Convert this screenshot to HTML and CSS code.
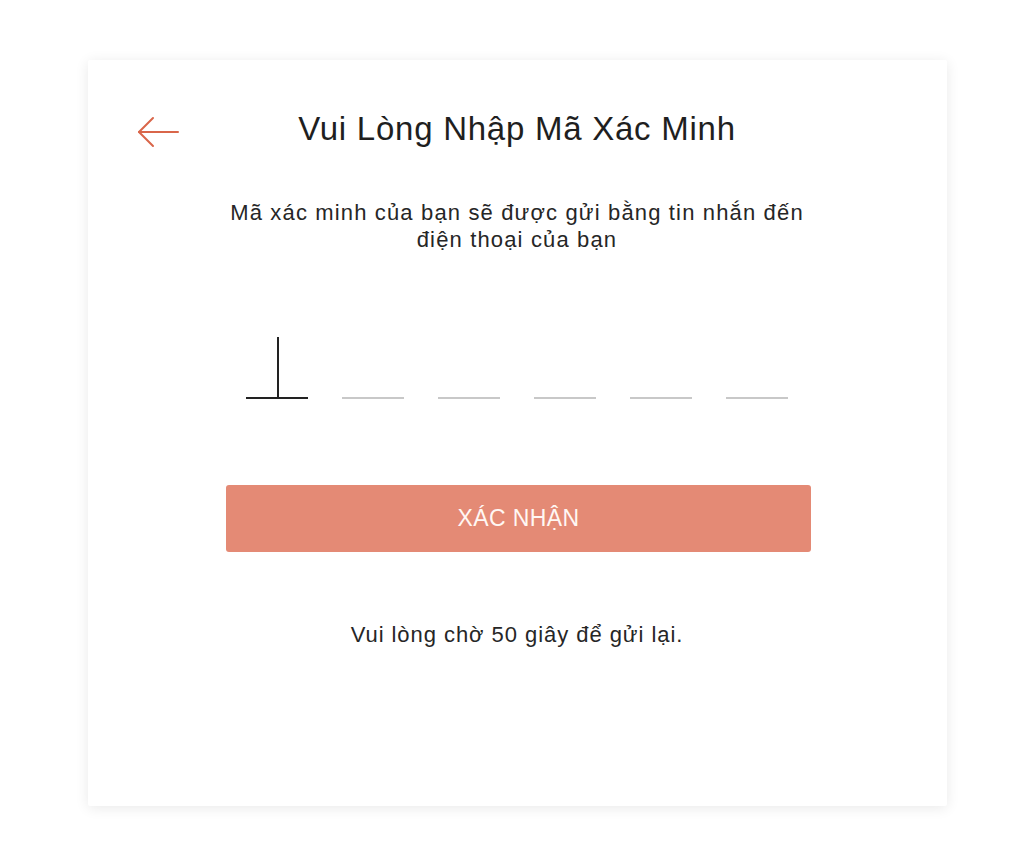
FILE: index.html
```html
<!DOCTYPE html>
<html lang="vi">
<head>
<meta charset="utf-8">
<title>Vui Lòng Nhập Mã Xác Minh</title>
<link rel="stylesheet" href="styles.css">
</head>
<body>
<main class="card">
  <header class="header">
    <button class="back" aria-label="Quay lại">
      <svg width="42" height="32" viewBox="0 0 42 32" fill="none" stroke="#d9664a" stroke-width="2" stroke-linecap="round" stroke-linejoin="round">
        <path d="M41 16H2"/>
        <path d="M16 2L2 16l14 14"/>
      </svg>
    </button>
    <h1 class="title">Vui Lòng Nhập Mã Xác Minh</h1>
    <span class="spacer"></span>
  </header>
  <p class="desc">Mã xác minh của bạn sẽ được gửi bằng tin nhắn đến<br>điện thoại của bạn</p>
  <div class="otp">
    <div class="cell active"><span class="cursor"></span></div>
    <div class="cell"></div>
    <div class="cell"></div>
    <div class="cell"></div>
    <div class="cell"></div>
    <div class="cell"></div>
  </div>
  <button class="confirm">XÁC NHẬN</button>
  <p class="resend">Vui lòng chờ 50 giây để gửi lại.</p>
</main>
</body>
</html>
```
FILE: styles.css
```css
* { box-sizing: border-box; }
html, body { margin: 0; }
body {
  background: #ffffff;
  font-family: "Liberation Sans", Arial, sans-serif;
  color: #222;
  padding: 60px 0 0 88px;
  width: 1024px;
  height: 847px;
}
.card {
  width: 859px;
  height: 746px;
  background: #fff;
  box-shadow: 0 2px 14px rgba(0, 0, 0, 0.09);
  border-radius: 2px;
  padding: 50px 50px 0 49px;
  display: flex;
  flex-direction: column;
  align-items: center;
}
.header {
  width: 100%;
  height: 44px;
  display: flex;
  align-items: center;
}
.back {
  width: 42px;
  height: 32px;
  padding: 0;
  border: 0;
  background: none;
  display: flex;
}
.spacer { width: 42px; }
.title {
  flex: 1;
  margin: 0;
  text-align: center;
  font-weight: 400;
  font-size: 33px;
  letter-spacing: 0.75px;
  line-height: 40px;
  color: #1f1f1f;
  position: relative;
  top: -3px;
}
.desc {
  margin: 45px 0 0;
  text-align: center;
  font-size: 22px;
  letter-spacing: 1.15px;
  line-height: 27px;
  color: #262626;
}
.otp {
  margin-top: 84px;
  display: flex;
  gap: 34px;
  margin-left: -1px;
}
.cell {
  width: 62px;
  height: 62px;
  border-bottom: 2px solid #c8c8c8;
  position: relative;
  display: flex;
  justify-content: center;
}
.cell.active { border-bottom-color: #222; }
.cursor {
  width: 2px;
  height: 60px;
  background: #222;
  margin-left: 2px;
}
.confirm {
  margin-top: 86px;
  margin-left: 3px;
  width: 585px;
  height: 67px;
  border: 0;
  border-radius: 3px;
  background: #e48a75;
  color: #fff7f3;
  font-family: "Liberation Sans", Arial, sans-serif;
  font-size: 23px;
  letter-spacing: 0.4px;
  padding: 0;
}
.resend {
  margin: 70px 0 0;
  text-align: center;
  font-size: 22px;
  letter-spacing: 0.95px;
  line-height: 26px;
  color: #262626;
}
```
